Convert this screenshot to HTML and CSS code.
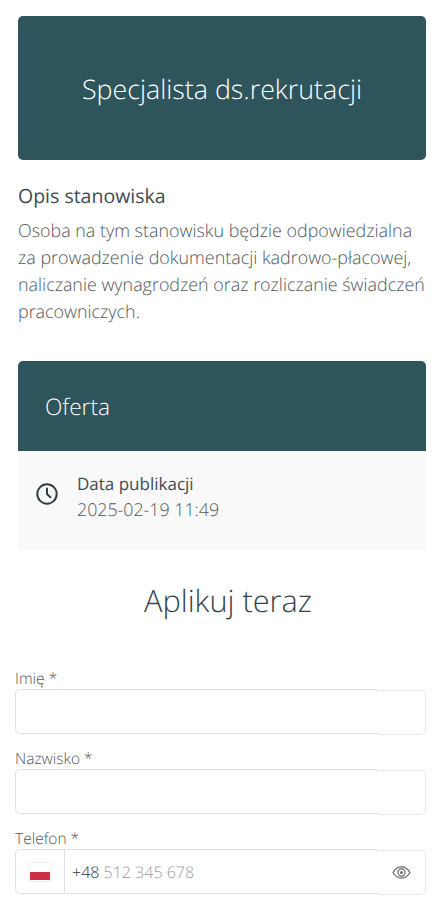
FILE: index.html
```html
<!DOCTYPE html>
<html lang="pl">

<head>
  <meta charset="UTF-8">
  <meta name="viewport" content="width=device-width, initial-scale=1.0">
  <link rel="stylesheet" href="styles.css">
  <title>Specjalista ds.rekrutacji</title>
</head>

<body>
  <div class="hero">Specjalista ds.rekrutacji</div>

  <section class="desc">
    <h2>Opis stanowiska</h2>
    <p>Osoba na tym stanowisku będzie odpowiedzialna za prowadzenie dokumentacji kadrowo-płacowej, naliczanie wynagrodzeń oraz rozliczanie świadczeń pracowniczych.</p>
  </section>

  <section class="offer">
    <div class="offer_head">Oferta</div>
    <div class="offer_row">
      <svg class="clock" viewBox="0 0 24 24" width="24" height="24" fill="none" stroke="#2f3f47" stroke-width="2" stroke-linecap="round" stroke-linejoin="round">
        <circle cx="12" cy="12" r="9.7"></circle>
        <path d="M12 6.5V12l3.4 3.2"></path>
      </svg>
      <div>
        <div class="offer_label">Data publikacji</div>
        <div class="offer_value">2025-02-19 11:49</div>
      </div>
    </div>
  </section>

  <h1 class="apply">Aplikuj teraz</h1>

  <form class="form">
    <label class="label">Imię *</label>
    <div class="field">
      <div class="field_main"></div>
      <div class="field_end"></div>
    </div>
    <label class="label">Nazwisko *</label>
    <div class="field">
      <div class="field_main"></div>
      <div class="field_end"></div>
    </div>
    <label class="label">Telefon *</label>
    <div class="field">
      <div class="field_main">
        <div class="flag_box"><span class="flag"><span class="flag_red"></span></span></div>
        <div class="phone"><span class="phone_code">+48</span> 512 345 678</div>
      </div>
      <div class="field_end">
        <svg class="eye" viewBox="0 0 20 16" width="19" height="15" fill="none" stroke="#666" stroke-width="1.3">
          <path d="M1 8c2.2-3.8 5.3-6 9-6s6.800 2.200 9 6c-2.200 3.800-5.300 6-9 6s-6.800-2.200-9-6z"></path>
          <circle cx="10" cy="8" r="3.800"></circle>
          <circle cx="10" cy="8" r="1.600" fill="#666" stroke="none"></circle>
        </svg>
      </div>
    </div>
  </form>
</body>

</html>
```

FILE: styles.css
```css
html {
  height: 900px;
  overflow: hidden;
}

body {
  margin: 0;
  padding: 16px 20px 0 15px;
  background: #fff;
  font-family: "Open Sans", "Noto Sans", sans-serif;
  color: #2f3f47;
  text-rendering: geometricPrecision;
}

.hero {
  display: flex;
  align-items: center;
  justify-content: center;
  height: 144px;
  margin-left: 3px;
  border-radius: 5px;
  background: #2e555c;
  color: #fff;
  font-size: 26.800px;
  font-weight: 300;
}

.desc {
  margin: 22px 0 0 3px;
}

.desc h2 {
  margin: 0;
  font-size: 19.500px;
  line-height: 28px;
  font-weight: 400;
  color: #3e4c54;
}

.desc p {
  margin: 8px 0 0;
  font-size: 17.900px;
  line-height: 27px;
  font-weight: 300;
  color: #50585d;
}

.offer {
  margin: 35px 0 0 3px;
}

.offer_head {
  display: flex;
  align-items: center;
  height: 90px;
  padding-left: 27px;
  border-radius: 5px 5px 0 0;
  background: #2e555c;
  color: #fff;
  font-size: 22.700px;
  font-weight: 300;
}

.offer_row {
  display: flex;
  gap: 18px;
  height: 99px;
  padding: 19px 0 0 17px;
  box-sizing: border-box;
  background: #f9f9f9;
}

.clock {
  margin-top: 12px;
}

.offer_label {
  font-size: 17px;
  line-height: 27px;
  color: #3e4c54;
}

.offer_value {
  font-size: 17.800px;
  line-height: 27px;
  font-weight: 300;
  color: #50585d;
}

.apply {
  margin: 27px 0 0;
  padding-left: 15px;
  text-align: center;
  font-size: 30.700px;
  line-height: 46px;
  font-weight: 300;
  color: #36454d;
}

.form {
  margin-top: 46px;
}

.label {
  display: block;
  margin-bottom: 2px;
  font-size: 15.500px;
  line-height: 18px;
  font-weight: 300;
  color: #50585d;
}

.field {
  display: flex;
  height: 46px;
  margin-bottom: 14px;
}

.field_main {
  display: flex;
  flex: 1;
  height: 45px;
  box-sizing: border-box;
  border: 1px solid #e3e3e3;
  border-right: 0;
  border-radius: 5px 0 0 5px;
}

.field_end {
  display: flex;
  align-items: center;
  justify-content: center;
  width: 48px;
  height: 45px;
  margin-top: 1px;
  box-sizing: border-box;
  border: 1px solid #e6e6e6;
  border-left: 0;
  border-radius: 0 5px 5px 0;
}

.flag_box {
  display: flex;
  align-items: center;
  justify-content: center;
  width: 49px;
  box-sizing: border-box;
  border-right: 1px solid #e3e3e3;
}

.flag {
  display: flex;
  align-items: flex-end;
  width: 22px;
  height: 18px;
  box-sizing: border-box;
  padding: 0 1px 1px;
  border-radius: 3px;
  background: #fff;
  box-shadow: 0 0 2px #ccc;
}

.flag_red {
  width: 100%;
  height: 8px;
  background: #cd2f44;
}

.phone {
  padding-left: 7px;
  font-size: 16px;
  line-height: 44px;
  font-weight: 300;
  color: #999;
}

.phone_code {
  color: #333;
}
```
